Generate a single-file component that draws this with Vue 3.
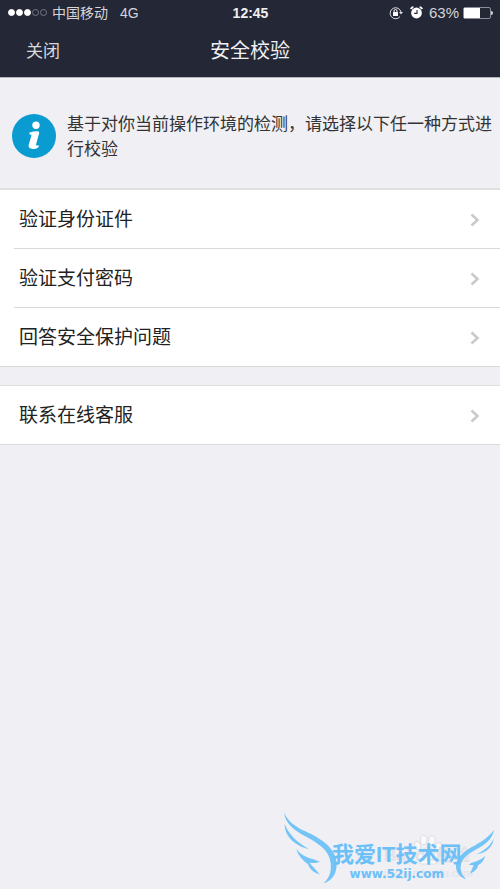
<script setup>
const carrier = { name: '中国移动', network: '4G', time: '12:45', battery: 63 }
const signal = [true, true, true, false, false]
const groups = [
  ['验证身份证件', '验证支付密码', '回答安全保护问题'],
  ['联系在线客服'],
]
</script>

<template>
  <div class="page">
    <header class="top">
      <div class="status">
        <div class="status-left">
          <span class="signal">
            <i v-for="(on, i) in signal" :key="i" class="dot" :class="{ on }"></i>
          </span>
          <span>{{ carrier.name }}</span>
          <span class="network">{{ carrier.network }}</span>
        </div>
        <span class="time">{{ carrier.time }}</span>
        <div class="status-right">
          <svg class="lock" viewBox="0 0 14 14" width="14" height="14" aria-hidden="true">
            <path d="M11 10.600A5.500 5.500 0 1 1 12 6" fill="none" stroke="#dcdce0" stroke-width="1" />
            <path d="M10 6h4l-2 2.600z" fill="#dcdce0" />
            <rect x="4" y="6" width="5" height="4" rx=".5" fill="#fff" />
            <path d="M5 6V5a1.500 1.500 0 0 1 3 0v1" fill="none" stroke="#fff" stroke-width="1" />
          </svg>
          <svg class="alarm" viewBox="0 0 13 13" width="13" height="13" aria-hidden="true">
            <circle cx="6.500" cy="7" r="5.400" fill="#fff" />
            <path d="M1.200 2.400 2.600 1.200M11.800 2.400 10.400 1.200" stroke="#fff" stroke-width="1.800" stroke-linecap="round" />
            <path d="M7 4v3.400H4.200" fill="none" stroke="#242736" stroke-width="1.100" />
          </svg>
          <span class="percent">{{ carrier.battery }}%</span>
          <span class="battery"><span class="charge" :style="{ width: carrier.battery + '%' }"></span></span>
        </div>
      </div>
      <nav class="nav">
        <button class="close" type="button">关闭</button>
        <h1 class="title">安全校验</h1>
      </nav>
    </header>

    <main>
      <section class="notice">
        <svg class="info" viewBox="0 0 44 44" width="44" height="44" aria-hidden="true">
          <circle cx="22" cy="22" r="22" fill="#0a9bd1" />
          <circle cx="24" cy="11.300" r="3.700" fill="#fff" />
          <path d="M17.500 18.500c3-.7 5.500-1.200 7.800-1.200 1.500 0 2.200.8 1.800 2.300l-3 10.700c-.3 1.100.4 1.500 3 1.200-.1 1.900-2.600 3.500-5.900 3.500-3.600 0-5.200-1.500-4.400-4.400l2.500-8.600c.3-1.100-.2-1.600-2-1.700z" fill="#fff" />
        </svg>
        <p class="message">基于对你当前操作环境的检测，请选择以下任一种方式进行校验</p>
      </section>

      <ul v-for="(items, g) in groups" :key="g" class="group">
        <li v-for="item in items" :key="item" class="item">
          <button class="row" type="button">
            <span>{{ item }}</span>
            <svg viewBox="0 0 10 14" width="10" height="14" aria-hidden="true">
              <path d="M1.500 1.500 7.500 7l-6 5.500" fill="none" stroke="#c9c9cb" stroke-width="2.500" />
            </svg>
          </button>
        </li>
      </ul>
    </main>

    <footer class="foot">
      <div class="mark">
        <svg class="art" viewBox="0 0 690 327" width="230" height="109" aria-hidden="true">
          <g fill="#f9f9fb" stroke="#dedee3" stroke-width="3">
            <ellipse cx="443" cy="197" rx="9" ry="13" transform="rotate(-20 443 197)" />
            <ellipse cx="461" cy="180" rx="10" ry="14" />
            <ellipse cx="486" cy="181" rx="10" ry="14" />
            <ellipse cx="505" cy="200" rx="9" ry="13" transform="rotate(20 505 200)" />
            <path d="M474 203c18 0 34 24 32 38-3 14-18 11-32 11s-29 3-32-11c-2-14 14-38 32-38z" />
          </g>
        </svg>
        <div class="under">
          <span class="under-name">Bai du经验</span>
          <span class="under-url">jingyan.baidu.com</span>
        </div>
        <svg class="art wings" viewBox="0 0 690 327" width="230" height="109" aria-hidden="true">
          <g fill="#74c4f8">
            <path d="M42 98c13 27 34 42 64 56 48 22 87 48 93 89 5 35-12 60-39 67 18-15 25-35 22-61-5-39-35-57-76-80-34-19-60-39-64-71z" />
            <path d="M44 132c13 31 35 54 72 75-35-8-72-33-72-75z" />
            <path d="M79 207c12 16 29 26 51 31l20 7c-11 5-23 4-31 3l7 9c11 11 17 19 23 27-17-5-31-18-35-31-15-12-29-25-35-46z" />
            <path d="M672 149c-17 25-43 39-68 53-30 17-45 36-46 57 0 20 13 33 30 39-10-12-17-23-16-37 1-21 16-36 43-51 30-16 53-33 57-61z" />
            <path d="M671 176c-10 21-27 35-52 47 27-4 49-20 52-47z" />
            <path d="M645 228c-11 11-25 17-40 20l-9 6 15 2-11 25c16-7 23-15 24-25 12-7 18-15 21-28z" />
          </g>
        </svg>
        <div class="brand">
          <span class="brand-name">我爱IT技术网</span>
          <span class="brand-url">www.52ij.com</span>
        </div>
      </div>
    </footer>
  </div>
</template>

<style>
body {
  background: #efeff4;
}
</style>

<style scoped>
.page {
  display: flex;
  flex-direction: column;
  min-height: 100vh;
  background: #efeff4;
  color: #222;
  font-family: "Liberation Sans", "Noto Sans CJK SC", sans-serif;
}
.top {
  background: #242736;
  color: #f0f0f2;
  border-bottom: 1px solid #b4b5bb;
}
.status {
  display: grid;
  grid-template-columns: 1fr auto 1fr;
  align-items: center;
  height: 25px;
  padding: 0 7px 0 8px;
  font-size: 14px;
  line-height: 20px;
}
.status-left,
.status-right {
  display: flex;
  align-items: center;
  color: #d4d5da;
}
.status-right {
  justify-content: flex-end;
}
.signal {
  display: flex;
  gap: 1px;
  margin-right: 5px;
}
.dot {
  box-sizing: border-box;
  width: 7px;
  height: 7px;
  border: 1px solid #777984;
  border-radius: 50%;
}
.dot.on {
  border-color: #fff;
  background: #fff;
}
.network {
  margin-left: 12px;
}
.time {
  font-weight: bold;
}
.alarm {
  margin: 0 6px 0 7px;
}
.percent {
  font-size: 15px;
}
.battery {
  position: relative;
  box-sizing: border-box;
  width: 28px;
  height: 12px;
  margin: 0 2px 0 4px;
  border: 1px solid #8b8d97;
  border-radius: 2px;
}
.battery::after {
  content: "";
  position: absolute;
  top: 3px;
  right: -3px;
  width: 2px;
  height: 4px;
  border-radius: 0 2px 2px 0;
  background: #d4d5da;
}
.charge {
  display: block;
  height: 100%;
  background: #fff;
}
.nav {
  display: grid;
  grid-template-columns: 1fr auto 1fr;
  align-items: center;
  height: 52px;
  padding: 0 26px 4px;
  box-sizing: border-box;
}
button {
  border: 0;
  background: none;
  color: inherit;
  font-family: inherit;
  cursor: pointer;
}
.close {
  justify-self: start;
  padding: 0;
  color: #d8d9dd;
  font-size: 17px;
}
.title {
  margin: 0;
  font-size: 20px;
  font-weight: 400;
}
.notice {
  display: flex;
  align-items: flex-start;
  gap: 11px;
  padding: 34px 7px 26px 12px;
}
.info {
  flex: none;
  margin-top: 2px;
}
.message {
  margin: 0;
  color: #333;
  font-size: 17px;
  line-height: 25px;
}
.group {
  margin: 0 0 18px;
  padding: 0;
  border-top: 2px solid #dfdfe2;
  border-bottom: 1px solid #d9d9dc;
  background: #fff;
  list-style: none;
}
.group + .group {
  border-top-width: 1px;
}
.item + .item {
  margin-left: 14px;
  border-top: 1px solid #d9d9dc;
}
.item + .item .row {
  padding-left: 5px;
}
.row {
  display: flex;
  align-items: center;
  justify-content: space-between;
  box-sizing: border-box;
  width: 100%;
  height: 58px;
  padding: 2px 20px 0 19px;
  font-size: 19px;
  line-height: 28px;
}
.foot {
  display: flex;
  justify-content: flex-end;
  margin-top: auto;
}
.mark {
  position: relative;
  width: 230px;
  height: 109px;
}
.art {
  display: block;
}
.wings {
  position: absolute;
  top: 0;
  left: 0;
}
.under,
.brand {
  position: absolute;
  display: flex;
  flex-direction: column;
  white-space: nowrap;
}
.under {
  top: 65px;
  left: 114px;
  color: #e2e2e7;
}
.under-name {
  font-size: 17px;
  font-weight: bold;
  line-height: 22px;
}
.under-url {
  font-size: 11px;
  line-height: 12px;
}
.brand {
  top: 62px;
  left: 62px;
  align-items: center;
  color: #6cc0f8;
}
.brand-name {
  font-size: 22px;
  font-weight: bold;
  line-height: 26px;
}
.brand-url {
  font-family: "DejaVu Sans", sans-serif;
  font-size: 12px;
  font-weight: bold;
  line-height: 13px;
}
</style>
